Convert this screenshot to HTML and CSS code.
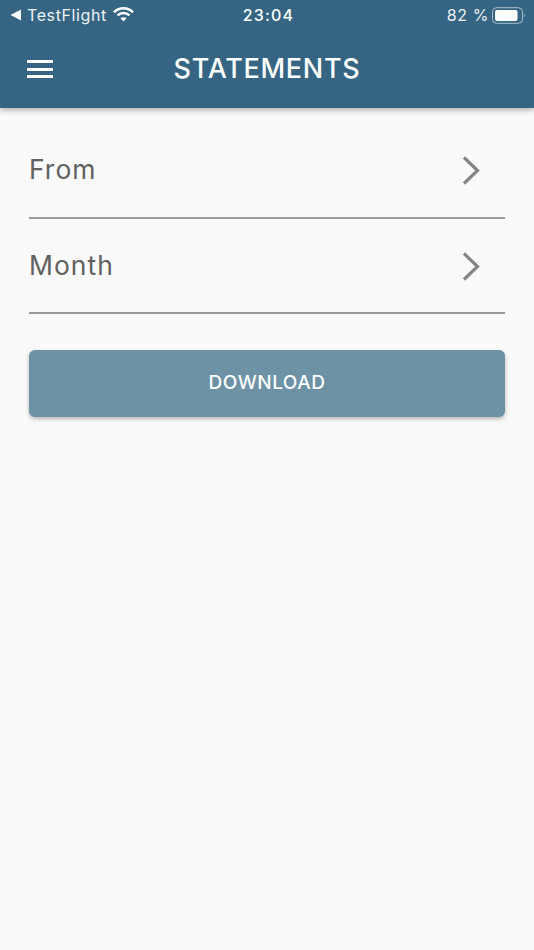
FILE: index.html
```html
<!DOCTYPE html>
<html lang="en">
<head>
<meta charset="utf-8">
<title>Statements</title>
<link rel="stylesheet" href="styles.css">
</head>
<body>
<header class="appbar">
  <div class="status">
    <div class="status-left">
      <svg class="back" width="12" height="12" viewBox="0 0 12 12"><path d="M11 0.500V11.500L0.500 6Z" fill="#fff"/></svg>
      <span>TestFlight</span>
      <svg class="wifi" width="21" height="15" viewBox="0 0 21 15"><path d="M1 5.2C6.4 0 14.6 0 20 5.2" class="w"/><path d="M4.5 8.4C8 5.2 13 5.2 16.5 8.4" class="w"/><path d="M10.5 14.6L7.4 11.3C9.2 9.8 11.8 9.8 13.6 11.3Z" fill="#fff"/></svg>
    </div>
    <div class="status-time">23:04</div>
    <div class="status-right">
      <span>82 %</span>
      <svg class="battery" width="35" height="17" viewBox="0 0 35 17"><rect x="0.5" y="0.7" width="30" height="15.6" rx="4" fill="none" stroke="#a9bfcd" stroke-width="1"/><rect x="3" y="3" width="22.500" height="11" rx="2" fill="#fff"/><path d="M32.500 6.500C33.500 7 33.500 10 32.500 10.500Z" fill="#a9bfcd"/></svg>
    </div>
  </div>
  <div class="toolbar">
    <button class="menu" aria-label="Menu"><i></i><i></i><i></i></button>
    <h1>STATEMENTS</h1>
  </div>
</header>
<main class="content">
  <div class="field">
    <span>From</span>
    <svg class="chev" width="18" height="30" viewBox="0 0 18 30"><path d="M2 2.500L15.500 15.500L2 28.500" /></svg>
  </div>
  <div class="field">
    <span>Month</span>
    <svg class="chev" width="18" height="30" viewBox="0 0 18 30"><path d="M2 2.500L15.500 15.500L2 28.500" /></svg>
  </div>
  <button class="download">DOWNLOAD</button>
</main>
</body>
</html>
```
FILE: styles.css
```css
* { box-sizing: border-box; }
html, body { margin: 0; height: 100%; }
body {
  width: 534px;
  height: 950px;
  overflow: hidden;
  background: #fafafa;
  font-family: Inter, Roboto, sans-serif;
}
.appbar {
  height: 108px;
  background: #356582;
  color: #fff;
  box-shadow: 0 2px 6px rgba(0,0,0,.32);
  position: relative;
}
.status {
  height: 30px;
  padding: 0 7px 0 10px;
  display: grid;
  grid-template-columns: 1fr auto 1fr;
  align-items: center;
  font-size: 16px;
  letter-spacing: .6px;
  color: #eef3f6;
}
.status-left { display: flex; align-items: center; gap: 5px; }
.status-left .wifi { margin-left: 1px; margin-top: -2px; }
.w { fill: none; stroke: #fff; stroke-width: 2.6; }
.status-time { font-weight: 500; color: #fff; letter-spacing: 1.2px; }
.status-right { display: flex; justify-content: flex-end; align-items: center; gap: 3px; }
.toolbar {
  height: 78px;
  position: relative;
  display: flex;
  align-items: center;
  justify-content: center;
}
.menu {
  position: absolute;
  left: 27px;
  top: 30px;
  width: 26px;
  height: 18px;
  padding: 0;
  border: 0;
  background: none;
  display: flex;
  flex-direction: column;
  justify-content: space-between;
}
.menu i { display: block; height: 3px; background: #fff; }
h1 {
  margin: 0;
  font-size: 27px;
  font-weight: 500;
  letter-spacing: .7px;
  line-height: 32px;
}
.content { padding: 15px 29px 0; }
.field {
  height: 95.500px;
  border-bottom: 2px solid #9a9a9a;
  display: flex;
  justify-content: space-between;
  align-items: flex-start;
  padding: 27px 25px 0 0;
  color: #616161;
  font-size: 26.500px;
  line-height: 38px;
  letter-spacing: 1px;
}
.chev { margin-top: 5px; }
.chev path { fill: none; stroke: #858585; stroke-width: 3.200; }
.download {
  display: block;
  width: 100%;
  height: 67px;
  margin-top: 36px;
  padding: 0 0 2px;
  border: 0;
  border-radius: 6px;
  background: #6d91a5;
  color: #fff;
  font-family: Inter, Roboto, sans-serif;
  font-size: 19px;
  font-weight: 500;
  letter-spacing: .5px;
  box-shadow: 0 2px 4px rgba(0,0,0,.28);
}
```
